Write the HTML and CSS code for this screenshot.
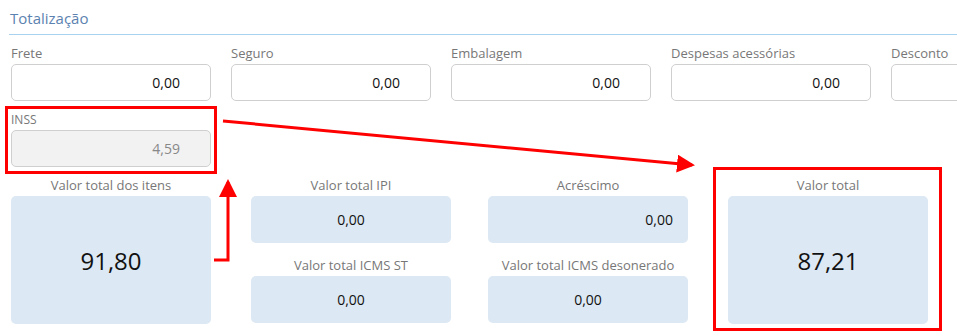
FILE: index.html
```html
<!DOCTYPE html>
<html lang="pt-BR">
<head>
  <meta charset="UTF-8">
  <title>Totalização</title>
  <link rel="stylesheet" href="styles.css">
</head>
<body>
  <div class="page">
    <h2 class="title">Totalização</h2>

    <div class="fields">
      <label class="field">Frete
        <input type="text" value="0,00">
      </label>
      <label class="field">Seguro
        <input type="text" value="0,00">
      </label>
      <label class="field">Embalagem
        <input type="text" value="0,00">
      </label>
      <label class="field">Despesas acessórias
        <input type="text" value="0,00">
      </label>
      <label class="field">Desconto
        <input type="text" value="0,00">
      </label>
    </div>

    <div class="fields second">
      <label class="field small">INSS
        <input type="text" value="4,59" disabled>
      </label>
    </div>

    <div class="totals">
      <div class="col">
        <div class="card">
          <div class="card-label">Valor total dos itens</div>
          <div class="card-box big">91,80</div>
        </div>
      </div>
      <div class="col col-ipi">
        <div class="card">
          <div class="card-label">Valor total IPI</div>
          <div class="card-box">0,00</div>
        </div>
        <div class="card">
          <div class="card-label">Valor total ICMS ST</div>
          <div class="card-box">0,00</div>
        </div>
      </div>
      <div class="col col-extra">
        <div class="card">
          <div class="card-label">Acréscimo</div>
          <div class="card-box right">0,00</div>
        </div>
        <div class="card">
          <div class="card-label">Valor total ICMS desonerado</div>
          <div class="card-box">0,00</div>
        </div>
      </div>
      <div class="col col-total">
        <div class="card">
          <div class="card-label">Valor total</div>
          <div class="card-box big">87,21</div>
        </div>
      </div>
    </div>

    <!-- marcações em vermelho -->
    <svg class="marks" width="957" height="336" viewBox="0 0 957 336">
      <defs>
        <marker id="head" markerWidth="6" markerHeight="6" refX="5" refY="3" orient="auto" markerUnits="strokeWidth">
          <path d="M0,0 L6,3 L0,6 z" fill="#f00"/>
        </marker>
      </defs>
      <rect x="6.5" y="107.5" width="209" height="65" fill="none" stroke="#f00" stroke-width="3"/>
      <rect x="714.5" y="168.5" width="226" height="161" fill="none" stroke="#f00" stroke-width="3"/>
      <line x1="223" y1="121" x2="692" y2="165" stroke="#f00" stroke-width="3" marker-end="url(#head)"/>
      <polyline points="214,260 228,260 228,182" fill="none" stroke="#f00" stroke-width="3" marker-end="url(#head)"/>
    </svg>
  </div>
</body>
</html>
```

FILE: styles.css
```css
* { box-sizing: border-box; }

body {
  margin: 0;
  font-family: 'Open Sans', 'Liberation Sans', sans-serif;
  color: #222;
  overflow: hidden;
  background: #fff;
}

.page {
  position: relative;
  width: 957px;
  height: 336px;
  overflow: hidden;
  padding: 8px 0 0 9px;
}

.title {
  margin: 0;
  padding: 0 0 6px 1px;
  font-size: 15px;
  font-weight: 400;
  line-height: 20px;
  color: #5b82b0;
  border-bottom: 1px solid #a9d2f0;
}

.fields {
  display: flex;
  gap: 20px;
  margin-top: 9px;
  padding-left: 2px;
  overflow: hidden;
}

.fields.second {
  margin-top: 11px;
}

.field {
  display: block;
  flex: 0 0 200px;
  font-size: 13px;
  line-height: 18px;
  color: #777;
}

.field.small {
  font-size: 12px;
  line-height: 16px;
}

.field input {
  display: block;
  width: 200px;
  height: 37px;
  margin-top: 2px;
  padding: 0 30px 0 10px;
  border: 1px solid #cfcfcf;
  border-radius: 5px;
  background: #fff;
  font-family: inherit;
  font-size: 14px;
  color: #111;
  text-align: right;
}

.field input:disabled {
  background: #f2f2f2;
  color: #888;
}

.totals {
  display: flex;
  margin-top: 9px;
  padding-left: 2px;
}

.col {
  display: flex;
  flex-direction: column;
  gap: 13px;
  width: 200px;
}

.col-ipi { margin-left: 40px; }
.col-extra { margin-left: 37px; }
.col-total { margin-left: 40px; }

.card-label {
  font-size: 13px;
  line-height: 18px;
  color: #777;
  text-align: center;
  margin-bottom: 2px;
}

.card-box {
  height: 47px;
  border-radius: 5px;
  background: #dce8f3;
  display: flex;
  align-items: center;
  justify-content: center;
  font-size: 14px;
  color: #111;
}

.card-box.right {
  justify-content: flex-end;
  padding-right: 15px;
}

.card-box.big {
  height: 128px;
  font-size: 24px;
}

.marks {
  position: absolute;
  top: 0;
  left: 0;
  pointer-events: none;
}
```
